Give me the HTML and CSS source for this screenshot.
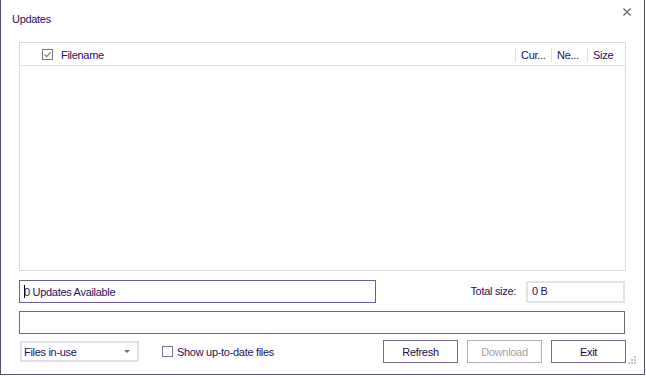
FILE: index.html
```html
<!DOCTYPE html>
<html>
<head>
  <title>Updates</title>
  <link rel="stylesheet" href="styles.css">
</head>
<body>
  <div class="window">
    <div class="titlebar">
      <span class="title">Updates</span>
      <button class="close" title="Close">
        <svg width="8" height="8" viewBox="0 0 8 8"><path d="M0.5 0.5 L7.5 7.5 M7.5 0.5 L0.5 7.5" stroke="#666" stroke-width="1.3"/></svg>
      </button>
    </div>

    <div class="content">
      <div class="list">
        <div class="list-header">
          <div class="col col-name">
            <span class="check checked">
              <svg width="9" height="9" viewBox="0 0 9 9"><path d="M1.5 4.5 L3.7 6.6 L7.5 2.2" fill="none" stroke="#8a8a8a" stroke-width="1.4"/></svg>
            </span>
            Filename
          </div>
          <div class="col col-cur">Cur...</div>
          <div class="col col-new">Ne...</div>
          <div class="col col-size">Size</div>
        </div>
      </div>

      <div class="status-row">
        <div class="status-box"><span class="caret"></span>0 Updates Available</div>
        <label class="total-label">Total size:</label>
        <div class="total-box">0 B</div>
      </div>

      <div class="progress"></div>

      <div class="bottom-row">
        <div class="combo">
          Files in-use
          <span class="arrow"></span>
        </div>
        <label class="show-check">
          <span class="check"></span>
          Show up-to-date files
        </label>
        <div class="buttons">
          <button class="btn">Refresh</button>
          <button class="btn" disabled>Download</button>
          <button class="btn">Exit</button>
        </div>
      </div>
    </div>

    <svg class="grip" width="8" height="8" viewBox="0 0 8 8">
      <rect x="6" y="0" width="2" height="2" fill="#c4c4c4"/>
      <rect x="3" y="3" width="2" height="2" fill="#c4c4c4"/>
      <rect x="6" y="3" width="2" height="2" fill="#c4c4c4"/>
      <rect x="0" y="6" width="2" height="2" fill="#c4c4c4"/>
      <rect x="3" y="6" width="2" height="2" fill="#c4c4c4"/>
      <rect x="6" y="6" width="2" height="2" fill="#c4c4c4"/>
    </svg>
  </div>
</body>
</html>
```

FILE: styles.css
```css
body {
  margin: 0;
  background-color: #fff;
  font-family: "Liberation Sans", Arial, sans-serif;
  font-size: 11px;
  letter-spacing: -0.3px;
  color: #2a0f5c;
}
.window {
  position: relative;
  width: 645px;
  height: 375px;
  box-sizing: border-box;
  border: 1px solid #5e4f70;
  border-top: none;
  background-color: #fff;
}
.titlebar {
  display: flex;
  justify-content: space-between;
  height: 42px;
  padding: 13px 0 0 11px;
  box-sizing: border-box;
}
.title {
  font-size: 11px;
  line-height: 13px;
}
.close {
  background: none;
  border: none;
  padding: 0;
  margin: -5px 13px 0 0;
  height: 8px;
  cursor: pointer;
}
.close svg {
  display: block;
}
.content {
  padding-left: 18px;
}
.list {
  width: 607px;
  height: 229px;
  box-sizing: border-box;
  border: 1px solid #dcd8e0;
}
.list-header {
  display: flex;
  height: 23px;
  padding-top: 1px;
  box-sizing: border-box;
  border-bottom: 1px solid #e4dfe8;
  align-items: center;
}
.col {
  display: flex;
  align-items: center;
  height: 14px;
  padding-left: 5px;
  border-left: 1px solid #e2dde7;
  white-space: nowrap;
}
.col-name {
  flex: 1;
  border-left: none;
  padding-left: 22px;
}
.col-cur {
  width: 30px;
}
.col-new {
  width: 30px;
}
.col-size {
  width: 32px;
}
.check {
  display: inline-flex;
  align-items: center;
  justify-content: center;
  width: 11px;
  height: 11px;
  box-sizing: border-box;
  border: 1px solid #7d7088;
  margin-right: 8px;
}
.check svg {
  display: block;
}
.status-row {
  display: flex;
  align-items: flex-start;
  width: 606px;
  margin-top: 9px;
  height: 23px;
}
.status-box {
  display: flex;
  align-items: center;
  width: 357px;
  height: 23px;
  box-sizing: border-box;
  border: 1px solid #6f5a8c;
  padding-left: 4px;
}
.caret {
  display: inline-block;
  width: 1px;
  height: 13px;
  background-color: #000;
  margin-right: -1px;
}
.total-label {
  margin-left: auto;
  margin-right: 10px;
  line-height: 23px;
}
.total-box {
  width: 99px;
  height: 22px;
  box-sizing: border-box;
  border: 2px solid #e3e3e3;
  padding-left: 4px;
  line-height: 17px;
  margin-top: 1px;
}
.progress {
  width: 606px;
  height: 23px;
  margin-top: 8px;
  box-sizing: border-box;
  border: 1px solid #6e6e6e;
}
.bottom-row {
  display: flex;
  align-items: center;
  width: 607px;
  height: 23px;
  margin-top: 6px;
}
.combo {
  position: relative;
  display: flex;
  align-items: center;
  width: 119px;
  height: 21px;
  margin-left: 1px;
  box-sizing: border-box;
  border: 2px solid #e4e0e7;
  padding-left: 2px;
}
.arrow {
  position: absolute;
  right: 7px;
  top: 7px;
  width: 0;
  height: 0;
  border-left: 3px solid transparent;
  border-right: 3px solid transparent;
  border-top: 3px solid #707070;
}
.show-check {
  display: flex;
  align-items: center;
  margin-left: 23px;
}
.show-check .check {
  margin-right: 4px;
}
.buttons {
  display: flex;
  margin-left: auto;
  gap: 9px;
}
.btn {
  width: 75px;
  height: 23px;
  box-sizing: border-box;
  background-color: #fff;
  border: 1px solid #7a6a8c;
  font-family: "Liberation Sans", Arial, sans-serif;
  font-size: 11px;
  letter-spacing: -0.3px;
  color: #1e0a40;
  padding: 0;
  cursor: pointer;
}
.btn:disabled {
  color: #a3a3a3;
  border-color: #b6aebf;
  cursor: default;
}
.grip {
  position: absolute;
  right: 8px;
  bottom: 10px;
}
```
